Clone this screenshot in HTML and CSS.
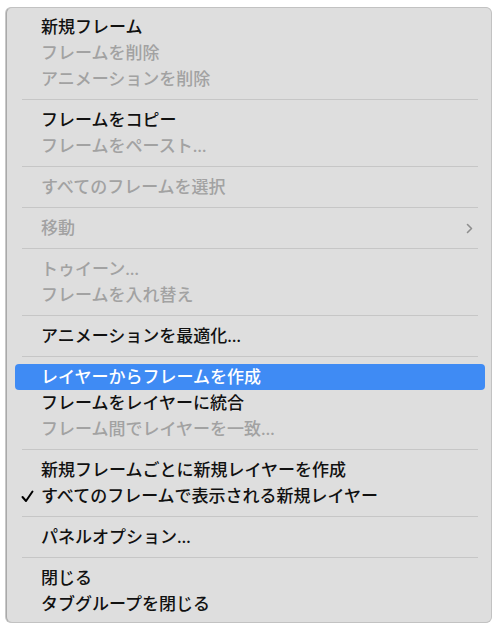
FILE: index.html
```html
<!DOCTYPE html>
<html lang="ja">
<head>
<meta charset="utf-8">
<link rel="stylesheet" href="styles.css">
</head>
<body>
<div class="menu">
  <div class="item">新規フレーム</div>
  <div class="item off">フレームを削除</div>
  <div class="item off">アニメーションを削除</div>
  <div class="sep"></div>
  <div class="item">フレームをコピー</div>
  <div class="item off">フレームをペースト…</div>
  <div class="sep"></div>
  <div class="item off">すべてのフレームを選択</div>
  <div class="sep"></div>
  <div class="item off">移動<svg class="arrow" width="7" height="11" viewBox="0 0 7 11"><polyline points="1.5,1.5 5.5,5.5 1.5,9.5" fill="none" stroke="#8e8e8e" stroke-width="1.6" stroke-linecap="round" stroke-linejoin="round"/></svg></div>
  <div class="sep"></div>
  <div class="item off">トゥイーン…</div>
  <div class="item off">フレームを入れ替え</div>
  <div class="sep"></div>
  <div class="item">アニメーションを最適化…</div>
  <div class="sep"></div>
  <div class="item hl">レイヤーからフレームを作成</div>
  <div class="item">フレームをレイヤーに統合</div>
  <div class="item off">フレーム間でレイヤーを一致…</div>
  <div class="sep"></div>
  <div class="item">新規フレームごとに新規レイヤーを作成</div>
  <div class="item"><svg class="check" width="13" height="13" viewBox="0 0 13 13"><polyline points="1.5,7 5,11 11.5,1.5" fill="none" stroke="#000" stroke-width="2" stroke-linecap="round" stroke-linejoin="round"/></svg>すべてのフレームで表示される新規レイヤー</div>
  <div class="sep"></div>
  <div class="item">パネルオプション…</div>
  <div class="sep"></div>
  <div class="item">閉じる</div>
  <div class="item">タブグループを閉じる</div>
</div>
</body>
</html>
```

FILE: styles.css
```css
html, body {
  margin: 0;
  padding: 0;
  background: #ffffff;
}

.menu {
  margin: 7px 0 0 6px;
  width: 486px;
  box-sizing: border-box;
  height: 616px;
  padding: 6px 6px 5px 8px;
  background: #dedede;
  border: 1px solid #c2c2c2;
  border-left: 1px solid #a9a9a9;
  border-radius: 6px;
  box-shadow: -1px 0 0 #c8c8c8;
  font-family: "Noto Sans", "Noto Sans CJK JP", sans-serif;
  font-size: 17px;
  font-weight: 500;
}

.item {
  position: relative;
  height: 26px;
  line-height: 25px;
  padding-left: 26px;
  color: #111111;
  border-radius: 4px;
  white-space: nowrap;
}

.item.off {
  color: #a2a2a2;
}

.item.hl {
  background: #3f8bf4;
  color: #ffffff;
}

.sep {
  height: 15px;
  position: relative;
}

.sep::after {
  content: "";
  position: absolute;
  left: 7px;
  right: 7px;
  top: 7px;
  height: 1px;
  background: #c6c6c6;
}

.arrow {
  position: absolute;
  right: 12px;
  top: 8px;
}

.check {
  position: absolute;
  left: 6px;
  top: 7px;
}
```
